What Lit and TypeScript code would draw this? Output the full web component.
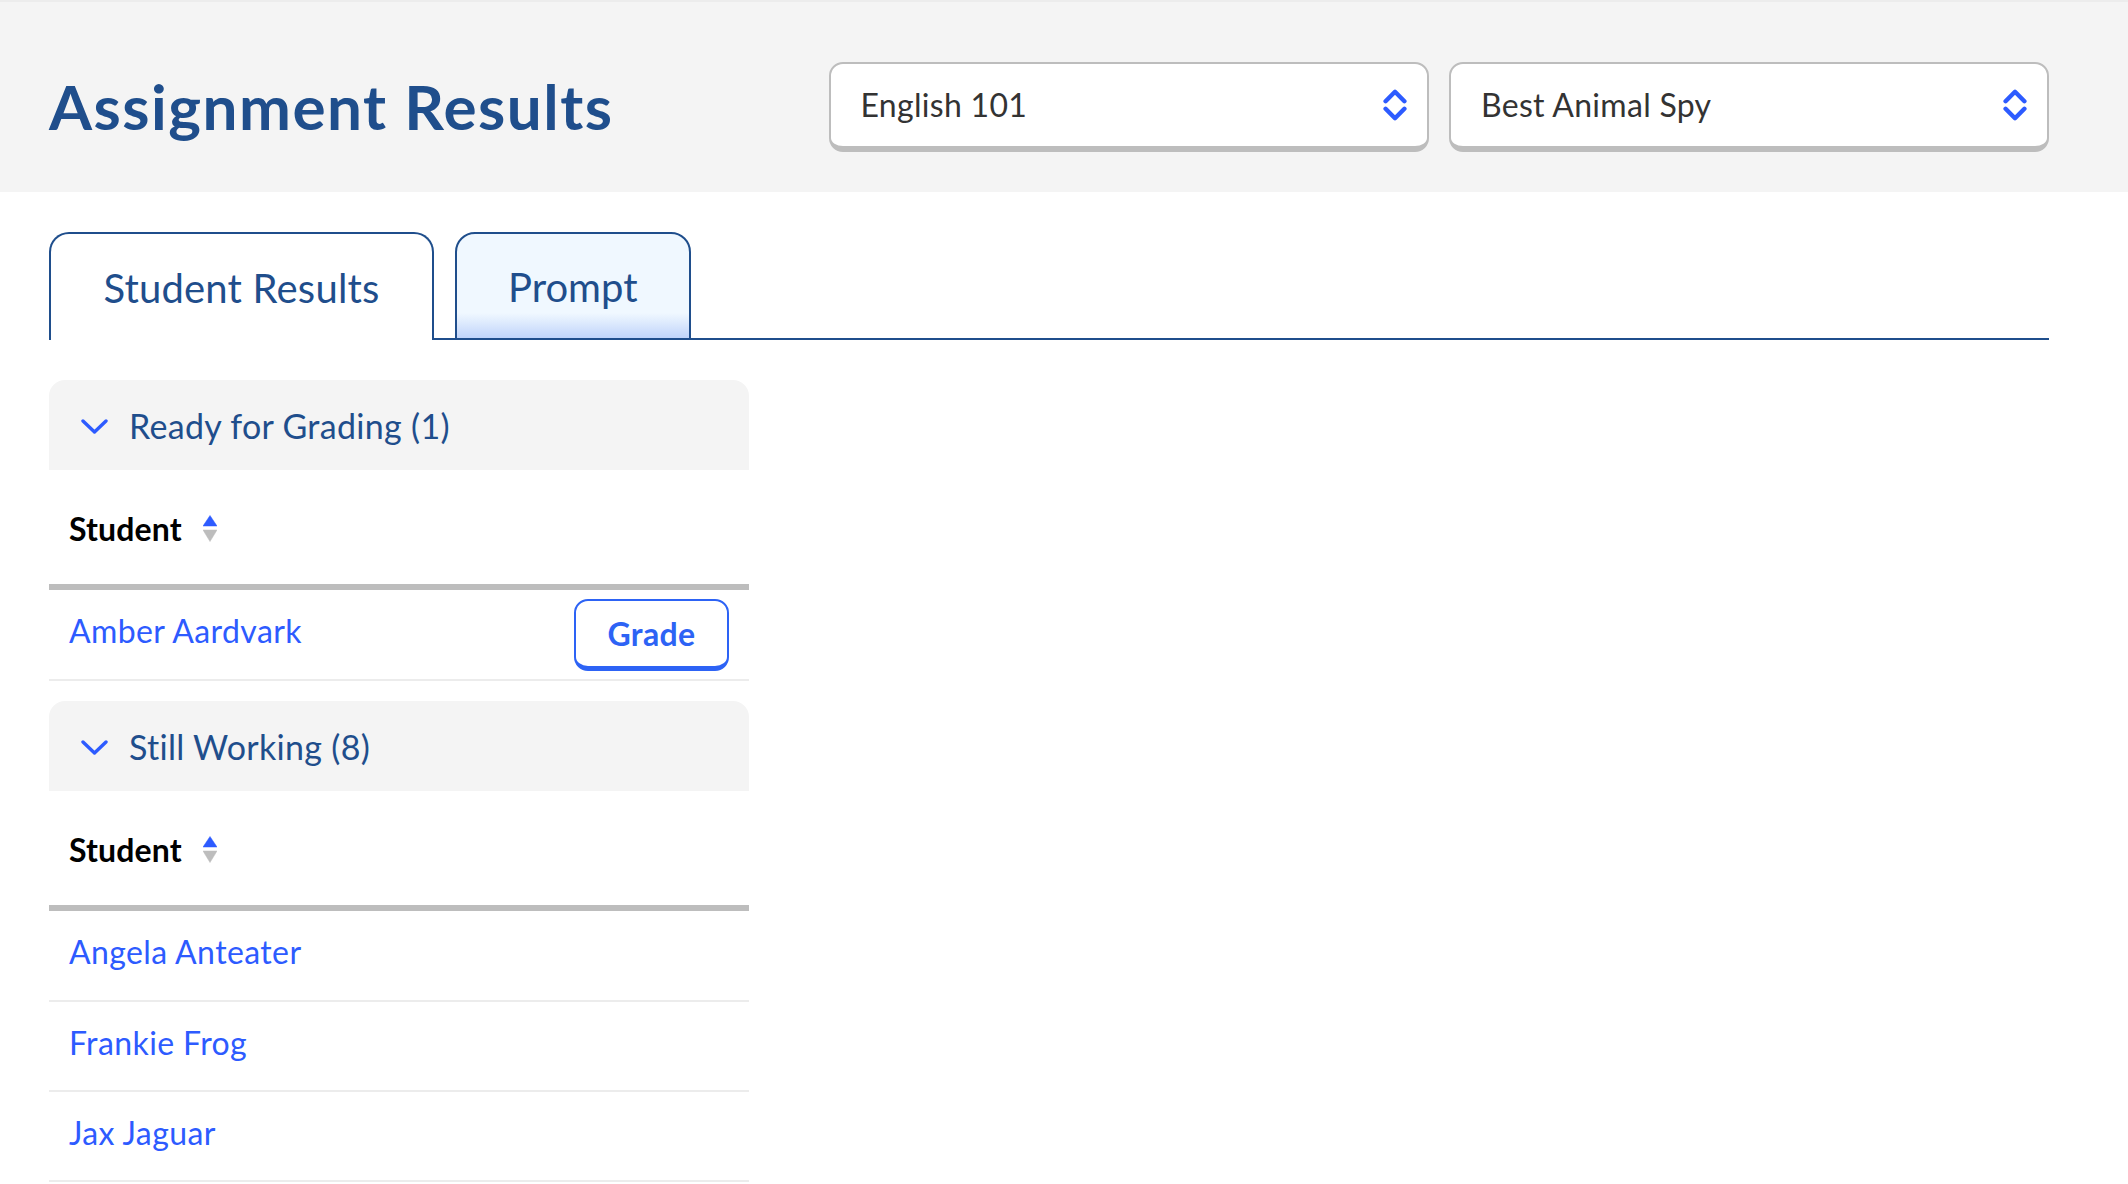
import { LitElement, html, css } from "lit";
import { customElement } from "lit/decorators.js";

const selectArrows = html`<svg class="arrows" viewBox="0 0 24 32" width="24" height="32" fill="none" stroke="#2d5bff" stroke-width="4.4" stroke-linecap="round" stroke-linejoin="round"><path d="M2.6 12.2 L12 2.8 L21.4 12.2"/><path d="M2.6 19.8 L12 29.2 L21.4 19.8"/></svg>`;
const chevron = html`<svg class="chev" viewBox="0 0 27 15" width="27" height="15" fill="none" stroke="#2d5bff" stroke-width="3.4" stroke-linecap="round" stroke-linejoin="round"><path d="M2 2 L13.5 13 L25 2"/></svg>`;
const sort = html`<svg class="sort" viewBox="0 0 14 27" width="14" height="27"><path d="M7 0.5 L14 11 L0 11 Z" fill="#2d5bff" stroke="#2d5bff" stroke-width="0.5" stroke-linejoin="round"/><path d="M0 15 L14 15 L7 26.5 Z" fill="#bdbdbd" stroke="#bdbdbd" stroke-width="0.5" stroke-linejoin="round"/></svg>`;

@customElement("app-root")
export class AppRoot extends LitElement {
  static styles = css`
    :host { display: block; height: 1184px; overflow: hidden; background: #fff; font-family: "Lato", "Noto Sans", sans-serif; }
    .top { display: flex; justify-content: space-between; border-top: 2px solid #ececec; background: #f4f4f4; height: 190px; box-sizing: content-box; padding: 0 79px 0 49px; }
    h1 { margin: 0; padding-top: 68px; font-size: 62px; line-height: 72px; font-weight: 700; color: #1f4e8c; letter-spacing: 1.5px; white-space: nowrap; }
    .selects { display: flex; gap: 20.5px; padding-top: 60px; }
    .select { box-sizing: border-box; width: 600px; height: 90px; display: flex; align-items: center; justify-content: space-between; background: #fff; border: 2px solid #bdbdbd; border-bottom-width: 6px; border-radius: 14px; padding: 0 20px 2px 30px; font-size: 32px; letter-spacing: 0.3px; color: #333; }
    .arrows { margin-top: 2px; }
    .main { padding: 40px 79px 0 49px; }
    .tabs { display: flex; height: 108px; }
    .tab { box-sizing: border-box; height: 108px; border: 2px solid #1f4e8c; border-bottom: none; border-radius: 20px 20px 0 0; display: flex; align-items: center; justify-content: center; padding-top: 2px; font-size: 40px; color: #1f4e8c; }
    .tab.one { width: 385px; background: #fff; letter-spacing: 0.2px; }
    .tab.two { width: 236.5px; border-bottom: 2px solid #1f4e8c; background: linear-gradient(to bottom, #f0f8ff 0, #f0f8ff 76%, #c0d4fa 100%); }
    .gap { width: 20.5px; border-bottom: 2px solid #1f4e8c; }
    .rest { flex: 1; border-bottom: 2px solid #1f4e8c; }
    .col { width: 700px; padding-top: 40px; display: flex; flex-direction: column; gap: 20px; }
    .head { height: 90px; background: #f4f4f4; border-radius: 16px 16px 0 0; display: flex; align-items: center; gap: 21px; padding-left: 32px; font-size: 34px; letter-spacing: 0.3px; color: #1f4e8c; }
    .chev { margin-top: 2px; }
    .th { display: flex; align-items: center; gap: 21px; padding-left: 20px; padding-top: 2px; box-sizing: border-box; height: 120px; font-size: 32px; font-weight: 700; letter-spacing: 0.15px; color: #000; border-bottom: 6px solid #bdbdbd; }
    .sort { margin-top: 1px; }
    .row { box-sizing: border-box; height: 90px; display: flex; align-items: center; justify-content: space-between; padding: 0 20px; border-bottom: 2px solid #ececec; font-size: 32px; letter-spacing: 0.4px; color: #2d5bff; }
    .th + .row { height: 91px; }
    .row .name { padding-bottom: 8px; }
    .btn { box-sizing: border-box; width: 155px; height: 72px; margin-top: 1px; display: flex; align-items: center; justify-content: center; background: #fff; border: 2.5px solid #2d63f5; border-bottom-width: 5px; border-radius: 14px; color: #2d63f5; font-weight: 700; font-size: 32px; }
    .arrows, .chev, .sort { display: block; flex: none; }
  `;

  section(title: string, rows: string[], grade: boolean) {
    return html`<section>
      <div class="head">${chevron}<span>${title}</span></div>
      <div class="th"><span>Student</span>${sort}</div>
      ${rows.map((r) => html`<div class="row"><span class="name">${r}</span>${grade ? html`<span class="btn">Grade</span>` : ""}</div>`)}
    </section>`;
  }

  render() {
    return html`
      <header class="top">
        <h1>Assignment Results</h1>
        <div class="selects">
          <div class="select"><span>English 101</span>${selectArrows}</div>
          <div class="select"><span>Best Animal Spy</span>${selectArrows}</div>
        </div>
      </header>
      <div class="main">
        <div class="tabs">
          <div class="tab one">Student Results</div>
          <div class="gap"></div>
          <div class="tab two">Prompt</div>
          <div class="rest"></div>
        </div>
        <div class="col">
          ${this.section("Ready for Grading (1)", ["Amber Aardvark"], true)}
          ${this.section("Still Working (8)", ["Angela Anteater", "Frankie Frog", "Jax Jaguar"], false)}
        </div>
      </div>
    `;
  }
}
